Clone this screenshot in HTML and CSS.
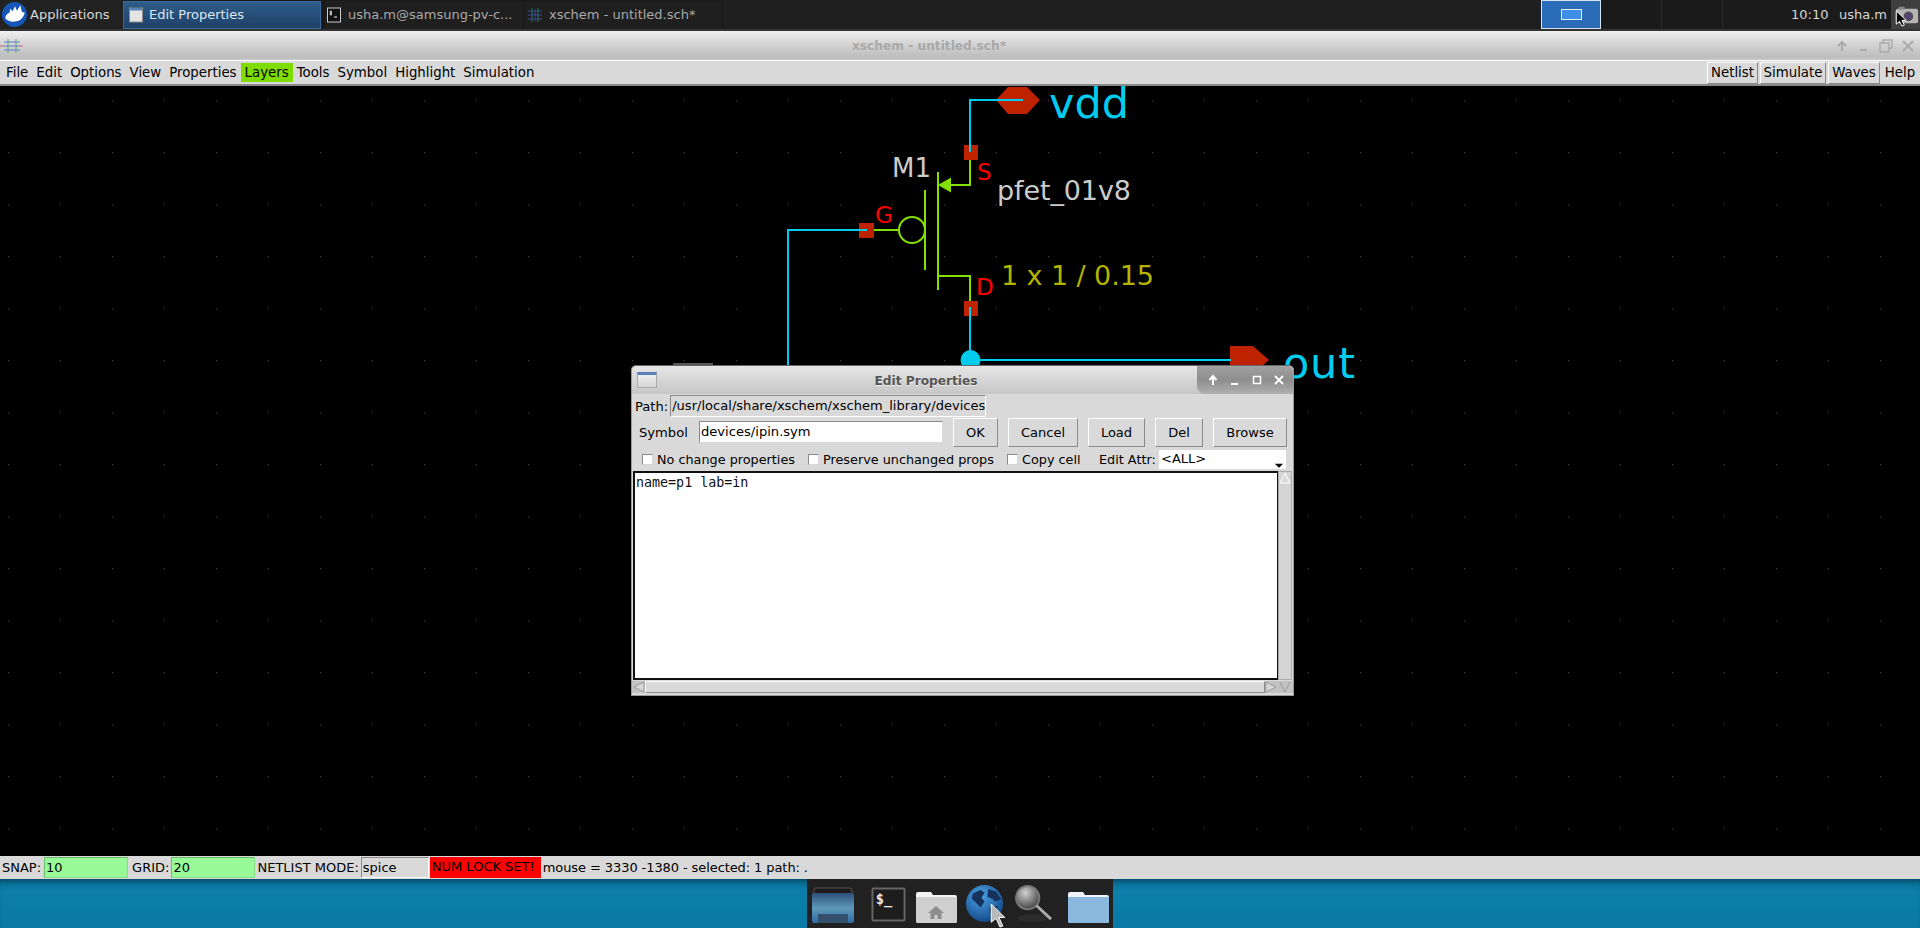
FILE: index.html
```html
<!DOCTYPE html>
<html lang="en">
<head>
<meta charset="utf-8">
<title>xschem - untitled.sch*</title>
<link rel="stylesheet" href="styles.css">
</head>
<body>
<div class="screen">
  <header class="panel">
    <div class="apps">
      <svg class="apps-logo" viewBox="0 0 28 28"><circle cx="14" cy="14" r="13" fill="#1656b8"/><path d="M4.500 18c0-3 2-5 4.500-6l.5-4 2.500 2.500 2.500-5 2 4.500 3.500-5.500 1.500 6.500c1 1 2 1 3 .5 0 3-2 6.500-5 8.500-4.500 2-12 2.500-15-2z" fill="#fff"/></svg>
      <span>Applications</span>
    </div>
    <div class="task task-active">
      <svg class="task-icon" viewBox="0 0 14 16"><rect x="0.500" y="1" width="13" height="14" fill="#e4e4e4" stroke="#888"/><rect x="1" y="1" width="12" height="2.500" fill="#5a80b8"/></svg>
      <span>Edit Properties</span>
    </div>
    <div class="task task-term">
      <svg class="task-icon" viewBox="0 0 14 16"><rect x="0.500" y="1" width="13" height="14" fill="#111" stroke="#ccc"/><path d="M4 3.500v5M2.500 5h2.500M2.500 7h2.500M7 10h3" stroke="#eee" fill="none"/></svg>
      <span>usha.m@samsung-pv-c...</span>
    </div>
    <div class="task task-xs">
      <svg class="task-icon" viewBox="0 0 14 16"><path d="M4 1v14M10 1v14" stroke="#2f7a3a" fill="none"/><path d="M0 4h14M0 8h14M0 12h14" stroke="#34509c" fill="none"/><path d="M7 2v12" stroke="#36449a" fill="none"/></svg>
      <span>xschem - untitled.sch*</span>
    </div>
    <div class="panel-fill"></div>
    <div class="pager">
      <div class="page page-on"><div class="page-win"></div></div>
      <div class="page"></div>
      <div class="page"></div>
    </div>
    <div class="clock">10:10</div>
    <div class="user">usha.m</div>
    <div class="tray">
      <svg viewBox="0 0 30 30" class="tray-cam"><rect x="5" y="9" width="23" height="15" rx="2" fill="#b4b4b4"/><rect x="8" y="7" width="6" height="3" fill="#888"/><circle cx="18" cy="17" r="5" fill="#544a5a"/><circle cx="18" cy="17" r="2" fill="#5a3a9a"/></svg>
      <svg viewBox="0 0 12 18" class="tray-cursor"><path d="M1 1v14l3.500-3 2.500 5 2.500-1-2.500-5h4.500z" fill="#000" stroke="#fff"/></svg>
    </div>
  </header>

  <div class="titlebar">
    <svg class="title-icon" viewBox="0 0 23 16"><path d="M8 1v14M16 1v14" stroke="#58b058" fill="none"/><path d="M4 4h8M12 4h8M4 8h8M12 8h8M4 12h8M12 12h8" stroke="#5a7ad0" fill="none"/><path d="M0 8h4M20 8h3" stroke="#d86060" fill="none"/></svg>
    <span class="title-text">xschem - untitled.sch*</span>
    <div class="title-btns">
      <svg viewBox="0 0 14 14"><path d="M7 12V4M3 7l4-4 4 4" stroke="#aaa" stroke-width="2" fill="none"/></svg>
      <svg viewBox="0 0 14 14"><path d="M3 11h7" stroke="#aaa" stroke-width="2" fill="none"/></svg>
      <svg viewBox="0 0 14 14"><path d="M4 4V1h9v8h-3M1 4h9v9H1z" stroke="#aaa" stroke-width="1.500" fill="none"/></svg>
      <svg viewBox="0 0 14 14"><path d="M2 2l10 10M12 2L2 12" stroke="#aaa" stroke-width="2" fill="none"/></svg>
    </div>
  </div>

  <nav class="menubar">
    <span class="menu">File</span>
    <span class="menu">Edit</span>
    <span class="menu">Options</span>
    <span class="menu">View</span>
    <span class="menu">Properties</span>
    <span class="menu menu-layers">Layers</span>
    <span class="menu">Tools</span>
    <span class="menu">Symbol</span>
    <span class="menu">Highlight</span>
    <span class="menu">Simulation</span>
    <span class="menu-fill"></span>
    <span class="tool tool-netlist">Netlist</span>
    <span class="tool tool-sim">Simulate</span>
    <span class="tool tool-waves">Waves</span>
    <span class="tool-help">Help</span>
  </nav>

  <main class="canvas">
    <svg class="schematic" viewBox="0 86 1920 771">
      <defs>
        <pattern id="grid" x="8" y="48" width="52" height="52" patternUnits="userSpaceOnUse">
          <rect x="0" y="0" width="1" height="1" fill="#4a4a4a"/>
        </pattern>
      </defs>
      <rect x="0" y="86" width="1920" height="771" fill="url(#grid)"/>
      <rect class="pin-grey" x="673" y="363" width="40" height="3"/>
      <g class="sym">
        <path d="M970 160V185H951M938 172V290M925 190V270M938 276H970V301M874 230H899"/>
        <circle cx="912" cy="230" r="13"/>
        <path class="sym-fill" d="M938 185L951 177.500V192.500Z"/>
      </g>
      <g class="pad">
        <rect x="964" y="145" width="14" height="15"/>
        <rect x="964" y="301" width="14" height="15"/>
        <rect x="859" y="223" width="15" height="15"/>
        <path d="M996 100L1008 87H1027L1040 100L1027 114H1008Z"/>
        <path d="M1230 346H1253L1269 360L1253 374H1230Z"/>
      </g>
      <g class="wire">
        <path d="M1023 100H970V152M970 307V360M970 360H1231M867 230H788V366"/>
      </g>
      <circle class="junction" cx="970.500" cy="360" r="10"/>
      <text class="t-pin" x="1049" y="118" textLength="80">vdd</text>
      <text class="t-pin" x="1283" y="378" textLength="72">out</text>
      <text class="t-m1" x="892" y="177">M1</text>
      <text class="t-name" x="997" y="200" textLength="134">pfet_01v8</text>
      <text class="t-size" x="1001" y="285" textLength="153">1 x 1 / 0.15</text>
      <text class="t-port" x="977" y="180">S</text>
      <text class="t-port" x="875" y="223">G</text>
      <text class="t-port" x="976" y="295">D</text>
    </svg>

    <section class="dialog">
      <div class="dlg-title">
        <span class="dlg-icon"></span>
        <span class="dlg-name">Edit Properties</span>
        <div class="dlg-btns">
          <svg viewBox="0 0 12 12"><path d="M6 11V4M2.500 6L6 2l3.500 4" stroke="#fff" stroke-width="2" fill="none"/></svg>
          <svg viewBox="0 0 12 12"><path d="M2 10h7" stroke="#fff" stroke-width="2" fill="none"/></svg>
          <svg viewBox="0 0 12 12"><path d="M2.500 2.500h7v7h-7z" stroke="#fff" stroke-width="1.500" fill="none"/></svg>
          <svg viewBox="0 0 12 12"><path d="M2 2l8 8M10 2l-8 8" stroke="#fff" stroke-width="1.800" fill="none"/></svg>
        </div>
      </div>
      <div class="row-path">
        <span class="lbl">Path:</span>
        <div class="path-val">/usr/local/share/xschem/xschem_library/devices</div>
      </div>
      <div class="row-symbol">
        <span class="lbl lbl-sym">Symbol</span>
        <div class="entry">devices/ipin.sym</div>
        <button class="btn btn-ok">OK</button>
        <button class="btn btn-cancel">Cancel</button>
        <button class="btn btn-load">Load</button>
        <button class="btn btn-del">Del</button>
        <button class="btn btn-browse">Browse</button>
      </div>
      <div class="row-checks">
        <span class="check"></span><span class="lbl lbl-c1">No change properties</span>
        <span class="check"></span><span class="lbl lbl-c2">Preserve unchanged props</span>
        <span class="check"></span><span class="lbl lbl-c3">Copy cell</span>
        <span class="lbl lbl-c4">Edit Attr:</span>
        <div class="combo"><span>&lt;ALL&gt;</span><svg viewBox="0 0 12 8" class="combo-arrow"><path d="M1 3h10L6 8z" fill="#000"/></svg></div>
      </div>
      <div class="text-wrap">
        <div class="textarea">name=p1 lab=in</div>
        <div class="vscroll">
          <svg viewBox="0 0 12 12" class="scroll-btn"><path d="M6 1L11 11H1z" fill="#d9d9d9" stroke="#fff"/></svg>
        </div>
      </div>
      <div class="hscroll">
        <svg viewBox="0 0 12 12" class="scroll-h"><path d="M1 6L11 1V11z" fill="#d9d9d9" stroke="#999"/></svg>
        <div class="hthumb"></div>
        <svg viewBox="0 0 12 12" class="scroll-h"><path d="M11 6L1 1V11z" fill="#d9d9d9" stroke="#999"/></svg>
        <svg viewBox="0 0 12 12" class="scroll-c"><path d="M1 1L6 11 11 1" fill="none" stroke="#999"/></svg>
      </div>
    </section>
  </main>

  <footer class="statusbar">
    <span class="st-lbl">SNAP:</span>
    <span class="st-entry st-green st-first">10</span>
    <span class="st-lbl st-gap">GRID:</span>
    <span class="st-entry st-green">20</span>
    <span class="st-lbl st-nl">NETLIST MODE:</span>
    <span class="st-entry st-grey">spice</span>
    <span class="st-red">NUM LOCK SET!</span>
    <span class="st-lbl st-msg">mouse = 3330 -1380 - selected: 1 path: .</span>
  </footer>

  <div class="desk">
    <div class="dock">
      <svg class="d-win" viewBox="0 0 42 36"><defs><linearGradient id="gw" x1="0" y1="0" x2="0" y2="1"><stop offset="0" stop-color="#2c4f7c"/><stop offset="0.500" stop-color="#5f98b8"/><stop offset="1" stop-color="#2f6aa8"/></linearGradient></defs><rect x="2" y="1" width="38" height="34" rx="2" fill="#1c1c1c" stroke="#555"/><rect x="0" y="6" width="42" height="30" rx="2" fill="url(#gw)"/><rect x="6" y="27" width="30" height="9" fill="#34506c"/></svg>
      <svg class="d-term" viewBox="0 0 36 36"><rect x="1.500" y="1.500" width="33" height="33" rx="1" fill="#1d1d1d" stroke="#666" stroke-width="2"/><text class="d-term-text" x="5" y="17">$_</text></svg>
      <svg class="d-home" viewBox="0 0 42 34"><path d="M1 5q0-2 2-2h13l2 3h22q2 0 2 2v24q0 2-2 2H3q-2 0-2-2z" fill="#f2f2f2"/><path d="M1 8h41v24q0 2-2 2H3q-2 0-2-2z" fill="#cfcfcf"/><path d="M21 17l-8 7h2.500v6h4v-4h3v4h4v-6H29z" fill="#8d8d8d"/></svg>
      <svg class="d-globe" viewBox="0 0 40 40"><defs><radialGradient id="gg" cx="0.400" cy="0.300" r="0.800"><stop offset="0" stop-color="#4aa2e6"/><stop offset="1" stop-color="#0d3f80"/></radialGradient></defs><circle cx="20" cy="20" r="19" fill="url(#gg)"/><path d="M8 10l8-4 4 3-3 5 3 4-4 6-5-5-4-4zM24 5l8 3 5 8-6 2-3-3-5-2zM27 22l7 1-3 8-4 1-2-6z" fill="#16315a"/></svg>
      <svg class="d-find" viewBox="0 0 40 40"><defs><radialGradient id="gf" cx="0.400" cy="0.300" r="0.800"><stop offset="0" stop-color="#cfcfcf"/><stop offset="1" stop-color="#333"/></radialGradient></defs><ellipse cx="20" cy="35" rx="15" ry="4" fill="#2b2b2b"/><circle cx="15" cy="14" r="12" fill="url(#gf)" stroke="#777" stroke-width="2"/><path d="M24 22l15 14" stroke="#aaa" stroke-width="3"/></svg>
      <svg class="d-folder" viewBox="0 0 42 34"><path d="M1 5q0-2 2-2h13l2 3h22q2 0 2 2v24q0 2-2 2H3q-2 0-2-2z" fill="#eef4f9"/><path d="M1 8h41v24q0 2-2 2H3q-2 0-2-2z" fill="#8ab8de"/></svg>
      <svg class="d-cursor" viewBox="0 0 16 26"><path d="M1 1v19l5-4 4 9 3-1-4-9h6z" fill="#b8b8b8" stroke="#fff"/></svg>
    </div>
  </div>
</div>
</body>
</html>
```

FILE: styles.css
```css
* { box-sizing: border-box; }
html, body { margin: 0; padding: 0; height: 100%; overflow: hidden; background: #000; }
body { font-family: "DejaVu Sans", sans-serif; font-size: 13px; color: #000; }
.screen { width: 1920px; height: 928px; display: flex; flex-direction: column; }

/* top panel */
.panel { height: 31px; background: #1b1b1b; border-bottom: 2px solid #333; display: flex; align-items: center; color: #d8d8d8; font-size: 13px; }
.apps { width: 123px; height: 29px; display: flex; align-items: center; gap: 2px; padding-left: 1px; background: #222; }
.apps-logo { width: 27px; height: 27px; }
.task { height: 28px; width: 196px; margin-right: 3px; display: flex; align-items: center; gap: 7px; padding-left: 5px; background: #1f1f1f; color: #a9a9a9; white-space: nowrap; }
.task-icon { width: 14px; height: 16px; flex: none; }
.task-active { background: linear-gradient(#2f5d8a, #1f4068); border: 1px solid #3a6a9a; color: #dfe8f0; margin-right: 5px; width: 198px; gap: 6px; }
.task-term { padding-left: 1px; }
.task-xs { padding-left: 3px; }
.panel-fill { flex: 1; background: #1f1f1f; height: 29px; }
.pager { display: flex; height: 29px; margin-right: 68px; }
.page { width: 61px; background: #1a1a1a; border-right: 1px solid #2b2b2b; }
.page-on { width: 60px; background: #2a6cb8; border: 1px solid #d6e4f3; display: flex; align-items: center; justify-content: center; }
.page-win { width: 21px; height: 11px; background: #3d8fe8; border: 1px solid #e8f0f8; }
.clock { width: 48px; }
.user { width: 52px; }
.tray { width: 29px; height: 29px; background: #3f3f3f; position: relative; }
.tray-cam { width: 29px; height: 29px; display: block; }
.tray-cursor { position: absolute; left: 4px; top: 10px; width: 12px; height: 17px; }

/* title bar */
.titlebar { height: 29px; background: linear-gradient(#f0f0f0, #d6d6d6 40%, #bdbdbd 90%, #c8c8c8); display: flex; align-items: center; padding: 0 5px 0 0; }
.title-icon { width: 23px; height: 16px; }
.title-text { flex: 1; text-align: center; font-weight: bold; font-size: 12.200px; color: #a8a8a8; }
.title-btns { display: flex; gap: 8px; }
.title-btns svg { width: 14px; height: 14px; }

/* menu */
.menubar { height: 26px; background: #d9d9d9; border-top: 1px solid #fff; border-bottom: 2px solid #8a8a8a; display: flex; align-items: center; padding: 0 2px; font-size: 13.330px; }
.menu { padding: 2px 4px; height: 19px; line-height: 15px; white-space: nowrap; }
.menu-layers { background: #7fdc00; }
.menu-fill { flex: 1; }
.tool { height: 22px; line-height: 20px; text-align: center; border: 1px solid; border-color: #fff #8a8a8a #8a8a8a #fff; margin-right: 2px; }
.tool-netlist { width: 51px; }
.tool-sim { width: 66px; }
.tool-waves { width: 52px; }
.tool-help { width: 36px; text-align: center; }

/* canvas */
.canvas { flex: 1; position: relative; background: #000; overflow: hidden; min-height: 0; }
.schematic { display: block; width: 1920px; height: 771px; }
.pin-grey { fill: #555; }
.sym { fill: none; stroke: #84e000; stroke-width: 2; }
.sym-fill { fill: #84e000; stroke: none; }
.pad { fill: #bf2200; }
.wire { fill: none; stroke: #00ccee; stroke-width: 2; }
.junction { fill: #00ccee; }
.t-pin { font-size: 43px; fill: #00ccee; font-family: "DejaVu Sans", sans-serif; }
.t-m1 { font-size: 26px; fill: #cccccc; font-family: "DejaVu Sans", sans-serif; }
.t-name { font-size: 27px; fill: #cccccc; font-family: "DejaVu Sans", sans-serif; }
.t-size { font-size: 27px; fill: #b3b300; font-family: "DejaVu Sans", sans-serif; }
.t-port { font-size: 23px; fill: #ff0000; font-family: "DejaVu Sans", sans-serif; }

/* dialog */
.dialog { position: absolute; left: 631px; top: 279px; width: 663px; height: 331px; background: #d9d9d9; border: 1px solid #9a9a9a; border-top-color: #666; border-radius: 5px 5px 0 0; display: flex; flex-direction: column; font-size: 13.100px; }
.dlg-title { height: 28px; flex: none; background: linear-gradient(#e6e6e6, #c6c6c6); border-radius: 5px 5px 0 0; display: flex; align-items: center; position: relative; }
.dlg-icon { width: 20px; height: 16px; margin-left: 5px; border: 1px solid #aaa; border-top: 3px solid #5a80b8; background: linear-gradient(#eee, #d5d5d5); }
.dlg-name { flex: 1; text-align: center; font-weight: bold; font-size: 12.200px; color: #555; padding-top: 2px; padding-right: 2px; text-shadow: 0 1px 0 #eee; }
.dlg-btns { width: 96px; height: 28px; display: flex; align-items: center; justify-content: space-around; padding: 0 3px 0 5px; background: linear-gradient(#a0a0a0, #8e8e8e 50%, #b0b0b0); border-radius: 0 5px 0 8px; }
.dlg-btns svg { width: 12px; height: 12px; }
.row-path { display: flex; align-items: center; height: 22px; margin-top: 1px; padding-left: 3px; gap: 2px; flex: none; }
.path-val { width: 316px; height: 22px; line-height: 19px; padding-left: 1px; font-size: 13px; letter-spacing: 0.030px; border: 1px solid; border-color: #8a8a8a #fff #fff #8a8a8a; overflow: hidden; white-space: nowrap; }
.row-symbol { display: flex; align-items: center; height: 30px; flex: none; }
.lbl { white-space: nowrap; }
.lbl-sym { margin-left: 7px; width: 60px; }
.entry { width: 244px; height: 22px; line-height: 20px; padding-left: 1px; background: #fff; border: 1px solid; border-color: #8a8a8a #d9d9d9 #d9d9d9 #8a8a8a; margin-right: 10px; }
.btn { font: inherit; font-size: 13px; height: 29px; padding: 0; background: #d9d9d9; color: #000; border: 1px solid; border-color: #fff #8a8a8a #8a8a8a #fff; margin-right: 10px; }
.btn-ok { width: 45px; }
.btn-cancel { width: 70px; }
.btn-load { width: 57px; }
.btn-del { width: 48px; }
.btn-browse { width: 74px; margin-right: 0; }
.row-checks { display: flex; align-items: center; height: 24px; flex: none; padding-left: 10px; font-size: 12.800px; }
.check { width: 11px; height: 11px; background: #fff; border: 1px solid; border-color: #8a8a8a #d9d9d9 #d9d9d9 #8a8a8a; margin-right: 4px; flex: none; }
.lbl-c1 { width: 151px; }
.lbl-c2 { width: 184px; }
.lbl-c3 { width: 77px; }
.lbl-c4 { width: 59px; }
.combo { width: 129px; height: 21px; background: #fff; border: 1px solid #d9d9d9; line-height: 18px; padding-left: 2px; font-size: 13px; position: relative; }
.combo-arrow { position: absolute; right: 2px; bottom: 1px; width: 10px; height: 7px; }
.text-wrap { flex: 1; display: flex; padding: 0 1px; min-height: 0; }
.textarea { flex: 1; background: #fff; border: 2px solid #111; border-right-width: 1px; font-family: "DejaVu Sans Mono", monospace; font-size: 13.330px; padding: 2px 1px; line-height: 15px; color: #111; }
.vscroll { width: 14px; background: #d4d4d4; border: 1px solid #aaa; padding: 0; }
.scroll-btn { display: block; width: 12px; height: 12px; }
.hscroll { height: 12px; flex: none; display: flex; align-items: center; padding: 0 1px; background: #c2c2c2; margin: 1px 0 2px; }
.hthumb { flex: 1; height: 12px; background: #d9d9d9; border: 1px solid; border-color: #fff #8a8a8a #8a8a8a #fff; }
.scroll-h { width: 12px; height: 12px; }
.scroll-c { width: 14px; height: 12px; margin-left: 1px; }

/* status bar */
.statusbar { height: 23px; background: #d9d9d9; display: flex; align-items: center; padding-left: 2px; font-size: 13px; flex: none; }
.st-lbl { white-space: nowrap; }
.st-entry { height: 21px; line-height: 19px; padding-left: 1px; border: 1px solid; }
.st-green { width: 84px; margin-left: 2px; background: #98fb98; border-color: #66bb66 #88dd88 #88dd88 #66bb66; }
.st-first { margin-left: 3px; }
.st-gap { margin-left: 4px; }
.st-nl { margin-left: 2px; }
.st-grey { width: 68px; margin-left: 2px; background: #d9d9d9; border-color: #8a8a8a #fff #fff #8a8a8a; }
.st-red { width: 111px; height: 21px; line-height: 19px; background: #ff0000; padding-left: 2px; margin-left: 1px; white-space: nowrap; }
.st-msg { margin-left: 2px; letter-spacing: -0.090px; }

/* desktop + dock */
.desk { height: 49px; flex: none; background: linear-gradient(#0a6f98 0, #0b7faa 12px, #0979a6); display: flex; justify-content: flex-start; padding-left: 807px; box-shadow: inset 0 6px 6px -4px rgba(0,0,0,0.4); }
.dock { width: 306px; height: 49px; background: #212121; position: relative; flex: none; }
.d-win { position: absolute; left: 5px; top: 8px; width: 42px; height: 36px; }
.d-term { position: absolute; left: 64px; top: 8px; width: 35px; height: 35px; }
.d-term-text { font-family: "DejaVu Sans Mono", monospace; font-size: 14px; font-weight: bold; fill: #eee; }
.d-home { position: absolute; left: 108px; top: 10px; width: 42px; height: 34px; }
.d-globe { position: absolute; left: 158px; top: 5px; width: 39px; height: 39px; }
.d-find { position: absolute; left: 206px; top: 5px; width: 39px; height: 39px; }
.d-folder { position: absolute; left: 260px; top: 10px; width: 42px; height: 34px; }
.d-cursor { position: absolute; left: 183px; top: 24px; width: 16px; height: 25px; }
```
